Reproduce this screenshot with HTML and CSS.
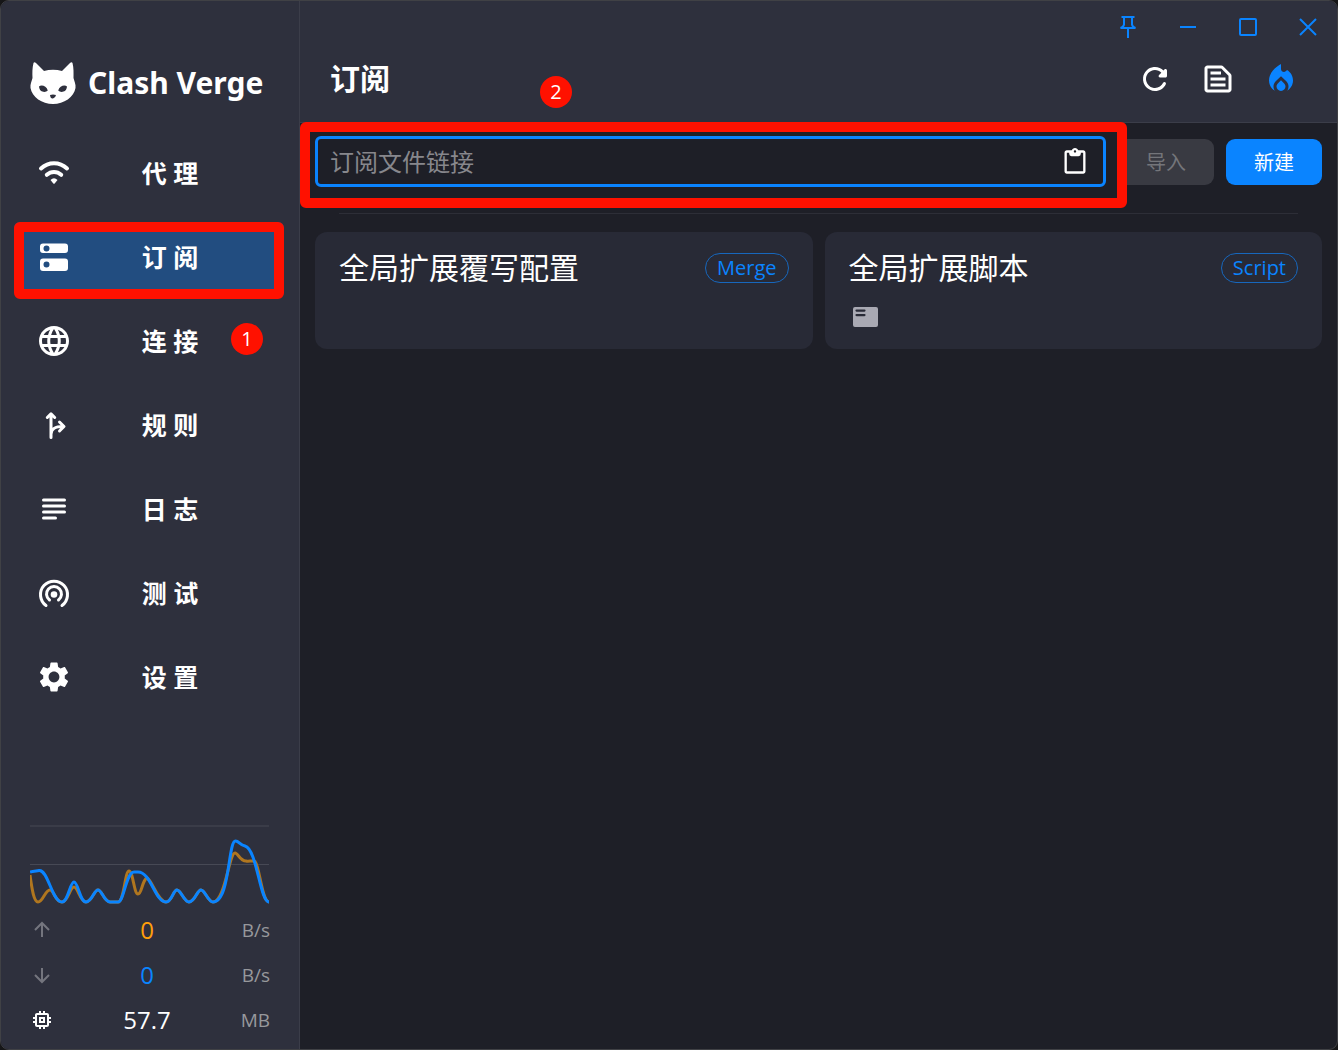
FILE: index.html
```html
<!DOCTYPE html>
<html lang="zh-CN">
<head>
    <meta charset="UTF-8">
    <meta name="viewport" content="width=device-width, initial-scale=1.0">
    <title>Clash Verge</title>
    <link rel="stylesheet" href="styles.css">
</head>
<body>
    <div class="window">
        <aside class="sidebar">
            <div class="brand">
                <svg class="brand-logo" viewBox="0 0 46 44">
                    <path fill="#fff" d="M3.500 2C4 1 5 1.200 6 2L14 10Q23 7.500 32 10L40 2C41 1.200 42 1 42.500 2C43.800 7 43.600 12 43.500 17C44.200 20 46 23 45.500 27C44 36 34 43 23 43S2 36 .5 27C0 23 1.800 20 2.500 17C2.300 12 2.200 7 3.500 2z"/>
                    <path fill="#2e303d" d="M9 25.500C11 23.500 16.500 24.500 17.800 29.500C15.500 32 9.500 31.500 9 25.500zM37 25.500C35 23.500 29.500 24.500 28.200 29.500C30.500 32 36.500 31.500 37 25.500zM20 34Q23 33 26 34Q25.500 37 23 37.500T20 34z"/>
                </svg>
                <span class="brand-name">Clash Verge</span>
            </div>

            <nav class="nav">
                <a href="#proxies" class="nav-item">
                    <svg class="icon" viewBox="0 0 36 36"><path class="line wide" d="M5 13.500C12.500 6.500 23.500 6.500 31 13.500M10.800 19.800C15 16 21 16 25.200 19.800"/><path d="M14.500 25Q18 21.500 21.500 25L18.700 28.500Q18 29.200 17.300 28.500z"/></svg>
                    <span class="nav-text">代 理</span>
                </a>
                <a href="#profiles" class="nav-item active">
                    <svg class="icon" viewBox="0 0 36 36"><path fill-rule="evenodd" d="M7 4.500h22q3 0 3 3v3.500q0 3-3 3H7q-3 0-3-3V7.500q0-3 3-3zM10.500 6.500a3 3 0 1 0 0 6a3 3 0 1 0 0-6zM7 19.500h22q3 0 3 3V29q0 3-3 3H7q-3 0-3-3v-6.500q0-3 3-3zM10.500 22.500a3 3 0 1 0 0 6a3 3 0 1 0 0-6z"/></svg>
                    <span class="nav-text">订 阅</span>
                    <span class="mark mark-nav"></span>
                </a>
                <a href="#connections" class="nav-item">
                    <svg class="icon" viewBox="0 0 24 24"><path d="M11.990 2C6.470 2 2 6.480 2 12s4.470 10 9.990 10C17.520 22 22 17.520 22 12S17.520 2 11.990 2zm6.930 6h-2.950c-.32-1.250-.78-2.450-1.380-3.560 1.840.63 3.370 1.910 4.330 3.560zM12 4.040c.83 1.200 1.480 2.530 1.910 3.960h-3.820c.43-1.430 1.080-2.760 1.910-3.960zM4.260 14C4.100 13.360 4 12.690 4 12s.1-1.360.26-2h3.380c-.08.66-.14 1.320-.14 2 0 .68.06 1.340.14 2H4.260zm.82 2h2.950c.32 1.250.78 2.450 1.380 3.560-1.840-.63-3.370-1.900-4.330-3.560zm2.950-8H5.080c.96-1.660 2.490-2.930 4.330-3.560C8.810 5.550 8.350 6.750 8.030 8zM12 19.960c-.83-1.200-1.480-2.530-1.910-3.960h3.820c-.43 1.430-1.080 2.760-1.910 3.960zM14.340 14H9.660c-.09-.66-.16-1.320-.16-2 0-.68.07-1.350.16-2h4.680c.09.65.16 1.320.16 2 0 .68-.07 1.340-.16 2zm.25 5.560c.6-1.110 1.060-2.310 1.380-3.560h2.950c-.96 1.650-2.490 2.930-4.330 3.560zM16.360 14c.08-.66.14-1.320.14-2 0-.68-.06-1.340-.14-2h3.380c.16.64.26 1.310.26 2s-.1 1.360-.26 2h-3.380z"/></svg>
                    <span class="nav-text">连 接</span>
                    <span class="step step-nav">1</span>
                </a>
                <a href="#rules" class="nav-item">
                    <svg class="icon" viewBox="0 0 36 36"><path class="line" d="M15 7v23.500M11.300 10.500L15 6.800l3.700 3.700M15 27c.5-5.500 4-7.500 12-7.500M23.500 15l4.500 4.500-4.500 4.500"/></svg>
                    <span class="nav-text">规 则</span>
                </a>
                <a href="#logs" class="nav-item">
                    <svg class="icon" viewBox="0 0 36 36"><path class="line" d="M7.500 9h21M7.500 15h21M7.500 21h21M7.500 27h12"/></svg>
                    <span class="nav-text">日 志</span>
                </a>
                <a href="#test" class="nav-item">
                    <svg class="icon" viewBox="0 0 36 36"><path class="line" d="M10 30.500a13.500 13.500 0 1 1 16 0M13.500 25a7.500 7.500 0 1 1 9 0"/><circle cx="18" cy="19.500" r="3.300"/></svg>
                    <span class="nav-text">测 试</span>
                </a>
                <a href="#settings" class="nav-item">
                    <svg class="icon" viewBox="0 0 24 24"><path d="M19.140 12.940c.04-.3.06-.61.06-.94 0-.32-.02-.64-.07-.94l2.030-1.580c.18-.14.23-.41.12-.61l-1.920-3.320c-.12-.22-.37-.29-.59-.22l-2.390.96c-.5-.38-1.030-.7-1.620-.94l-.36-2.540c-.04-.24-.24-.41-.48-.41h-3.840c-.24 0-.43.17-.47.41l-.36 2.540c-.59.24-1.130.57-1.620.94l-2.390-.96c-.22-.08-.47 0-.59.22L2.740 8.870c-.12.21-.08.47.12.61l2.030 1.580c-.05.3-.09.63-.09.94s.02.64.07.94l-2.030 1.580c-.18.14-.23.41-.12.61l1.920 3.320c.12.22.37.29.59.22l2.390-.96c.5.38 1.030.7 1.620.94l.36 2.540c.05.24.24.41.48.41h3.840c.24 0 .44-.17.47-.41l.36-2.540c.59-.24 1.130-.56 1.620-.94l2.390.96c.22.08.47 0 .59-.22l1.920-3.320c.12-.22.07-.47-.12-.61l-2.010-1.580zM12 15.600c-1.980 0-3.600-1.620-3.600-3.600s1.620-3.600 3.600-3.600 3.600 1.620 3.600 3.600-1.620 3.600-3.600 3.600z"/></svg>
                    <span class="nav-text">设 置</span>
                </a>
            </nav>

            <div class="traffic">
                <svg class="traffic-graph" viewBox="0 0 240 83">
                    <path class="graph-grid" d="M0 2H239M0 40.500H239"/>
                    <path class="graph-up" d="M0 51C2 66 4 78 8 78C13 78 15 66 20 66C24 66 25 78 32 78C38 78 40 63 44 63C48 63 50 78 56 78C62 78 64 66 68 66C72 66 74 78 80 78H88C94 78 95 47 99 47C103 47 104 70 108 70C112 70 112 56 117 54C122 56 128 78 136 78C142 78 143 66 147 66C151 66 154 78 159 78C165 78 167 66 171 66C175 66 178 78 183 78C195 78 199 29 205 29C208 29 210 37 216 37C219 38 222 36 225 37.500C230 44 232 78 239 78"/>
                    <path class="graph-down" d="M0 48C3 47 6 47 9 46.500C18 45 22 78 32 78C38 78 40 58 44 58C48 58 50 78 56 78C62 78 64 66 68 66C72 66 74 78 80 78H88C94 78 96 48 104 48H108C121 48 125 78 136 78C142 78 143 66 147 66C151 66 154 78 159 78C165 78 167 66 171 66C175 66 178 78 183 78C200 78 198 17 205.500 17C209 17 210 21 215 22C227 25 230 78 239 78"/>
                </svg>
                <div class="stat">
                    <svg class="stat-icon dim" viewBox="0 0 24 24"><path d="M12 19V5M5 12l7-7 7 7"/></svg>
                    <span class="stat-value up">0</span>
                    <span class="stat-unit">B/s</span>
                </div>
                <div class="stat">
                    <svg class="stat-icon dim" viewBox="0 0 24 24"><path d="M12 5v14M5 12l7 7 7-7"/></svg>
                    <span class="stat-value down">0</span>
                    <span class="stat-unit">B/s</span>
                </div>
                <div class="stat">
                    <svg class="stat-icon" viewBox="0 0 24 24"><path d="M15 9H9v6h6V9zm-2 4h-2v-2h2v2zm8-2V9h-2V7c0-1.100-.9-2-2-2h-2V3h-2v2h-2V3H9v2H7c-1.100 0-2 .9-2 2v2H3v2h2v2H3v2h2v2c0 1.100.9 2 2 2h2v2h2v-2h2v2h2v-2h2c1.100 0 2-.9 2-2v-2h2v-2h-2v-2h2zm-4 6H7V7h10v10z"/></svg>
                    <span class="stat-value">57.7</span>
                    <span class="stat-unit">MB</span>
                </div>
            </div>
        </aside>

        <main class="main">
            <header class="header">
                <div class="window-controls">
                    <button type="button" aria-label="Pin"><svg viewBox="0 0 24 24"><path d="M5.500 2h13M8 2v7.500Q7.500 12 4.500 13h15Q16.500 12 16 9.500V2M12 13v10"/></svg></button>
                    <button type="button" aria-label="Minimize"><svg viewBox="0 0 24 24"><path d="M4 12h16"/></svg></button>
                    <button type="button" aria-label="Maximize"><svg viewBox="0 0 24 24"><rect x="4" y="4" width="16" height="16" rx="1"/></svg></button>
                    <button type="button" aria-label="Close"><svg viewBox="0 0 24 24"><path d="M4 4l16 16M20 4L4 20"/></svg></button>
                </div>
                <div class="title-row">
                    <h1>订阅</h1>
                    <div class="actions">
                        <button type="button" aria-label="Refresh"><svg class="icon" viewBox="0 0 24 24"><path d="M17.650 6.350c-1.630-1.630-3.940-2.570-6.480-2.310-3.670.37-6.690 3.350-7.100 7.020C3.520 15.910 7.270 20 12 20c3.190 0 5.930-1.870 7.210-4.560.32-.67-.16-1.440-.9-1.440-.37 0-.72.2-.88.53-1.130 2.430-3.840 3.970-6.800 3.310-2.220-.49-4.010-2.300-4.480-4.520C5.310 9.440 8.260 6 12 6c1.660 0 3.140.69 4.220 1.780l-1.510 1.510c-.63.63-.19 1.710.7 1.710H19c.55 0 1-.45 1-1V6.410c0-.89-1.080-1.340-1.710-.71z"/></svg></button>
                        <button type="button" aria-label="Runtime config"><svg class="icon" viewBox="0 0 24 24"><path d="M14.170 5 19 9.830V19H5V5h9.170m0-2H5c-1.100 0-2 .9-2 2v14c0 1.100.9 2 2 2h14c1.100 0 2-.9 2-2V9.830c0-.53-.21-1.040-.59-1.410l-4.830-4.830c-.37-.38-.88-.59-1.410-.59zM7 15h10v2H7v-2zm0-4h10v2H7v-2zm0-4h7v2H7V7z"/></svg></button>
                        <button type="button" class="fire" aria-label="Reactivate"><svg class="icon" viewBox="0 0 24 24"><path d="M16 6l-.44.55C14.380 8.020 12 7.190 12 5.300V2S4 6 4 13c0 2.920 1.560 5.470 3.890 6.860-.56-.79-.89-1.760-.89-2.800 0-1.320.52-2.560 1.470-3.500L12 10.100l3.530 3.470c.95.93 1.470 2.170 1.470 3.500 0 1.020-.31 1.960-.85 2.750 1.890-1.150 3.290-3.060 3.710-5.300.66-3.550-1.070-6.900-3.860-8.520zM12 12.900l-2.130 2.090c-.56.56-.87 1.290-.87 2.070C9 18.680 10.350 20 12 20s3-1.320 3-2.940c0-.78-.31-1.520-.87-2.070L12 12.900z"/></svg></button>
                    </div>
                </div>
                <span class="step step-header">2</span>
            </header>

            <section class="content">
                <form class="toolbar" onsubmit="return false;">
                    <div class="url-field">
                        <input type="text" id="profile-url" placeholder="订阅文件链接" aria-label="订阅文件链接">
                        <button type="button" class="paste" aria-label="Paste"><svg viewBox="0 0 24 24"><path d="M19 2h-4.180C14.400.84 13.300 0 12 0S9.600.84 9.180 2H5c-1.100 0-2 .9-2 2v16c0 1.100.9 2 2 2h14c1.100 0 2-.9 2-2V4c0-1.100-.9-2-2-2zm-7 0c.55 0 1 .45 1 1s-.45 1-1 1-1-.45-1-1 .45-1 1-1zm7 18H5V4h2v1q0 2 2 2h6q2 0 2-2V4h2v16z"/></svg></button>
                        <span class="mark mark-field"></span>
                    </div>
                    <button type="submit" class="btn" disabled>导入</button>
                    <button type="button" class="btn btn-primary">新建</button>
                </form>

                <hr class="divider">

                <div class="cards">
                    <article class="card">
                        <div class="card-head">
                            <h2>全局扩展覆写配置</h2>
                            <span class="chip">Merge</span>
                        </div>
                    </article>
                    <article class="card">
                        <div class="card-head">
                            <h2>全局扩展脚本</h2>
                            <span class="chip">Script</span>
                        </div>
                        <button type="button" class="console" aria-label="Console"><svg viewBox="0 0 32 30"><path fill-rule="evenodd" d="M6 5h21q2 0 2 2v16q0 2-2 2H6q-2 0-2-2V7q0-2 2-2zM7.500 7.500a1 1 0 0 0 0 2.200h8a1 1 0 0 0 0-2.200zM7.500 12a1 1 0 0 0 0 2.200h8a1 1 0 0 0 0-2.200z"/></svg></button>
                    </article>
                </div>
            </section>
        </main>
    </div>
</body>
</html>
```

FILE: styles.css
```css
* {
    box-sizing: border-box;
}

body {
    margin: 0;
    background-color: #161618;
    color: #fff;
    font-family: "Open Sans", "Noto Sans CJK SC", sans-serif;
}

h1, h2 {
    margin: 0;
}

button {
    padding: 0;
    border: none;
    background: none;
    color: inherit;
    font-family: inherit;
    cursor: pointer;
}

svg {
    display: block;
}

.window {
    display: flex;
    min-height: 100vh;
    border: 1px solid #404145;
    border-radius: 9px;
    overflow: hidden;
    background-color: #1e1f27;
}

.icon {
    width: 36px;
    height: 36px;
    flex-shrink: 0;
    fill: currentColor;
}

.icon .line {
    fill: none;
    stroke: currentColor;
    stroke-width: 3;
    stroke-linecap: round;
    stroke-linejoin: round;
}

.icon .wide {
    stroke-width: 4;
}

/* sidebar */
.sidebar {
    display: flex;
    flex-direction: column;
    flex-shrink: 0;
    width: 299px;
    padding: 60px 0 7px;
    border-right: 1px solid #3b3d49;
    background-color: #2e303d;
}

.brand {
    display: flex;
    align-items: center;
    gap: 12px;
    height: 44px;
    margin: 0 29px 33px;
}

.brand-logo {
    width: 46px;
    height: 44px;
}

.brand-name {
    font-family: "Noto Sans", "Open Sans", sans-serif;
    font-size: 30px;
    font-weight: 700;
    line-height: 44px;
    white-space: nowrap;
}

.nav {
    display: flex;
    flex: 1;
    flex-direction: column;
    gap: 14px;
    padding: 0 15px 0 13px;
}

.nav-item {
    position: relative;
    display: flex;
    align-items: center;
    height: 70px;
    padding: 0 16px 0 22px;
    border-radius: 6px;
    color: #fff;
    text-decoration: none;
}

.nav-item.active {
    background-color: #224d80;
}

.nav-text {
    flex: 1;
    font-size: 25px;
    font-weight: 700;
    line-height: 36px;
    text-align: center;
}

/* red guide marks */
.mark {
    position: absolute;
    border: 10px solid #ff1100;
    border-radius: 6px;
    pointer-events: none;
}

.mark-nav {
    inset: 0 0 -7px;
}

.mark-field {
    inset: -17px -24px -24px -18px;
}

.step {
    position: absolute;
    width: 32px;
    height: 32px;
    border-radius: 50%;
    background-color: #ff1100;
    font-size: 20px;
    line-height: 32px;
    text-align: center;
}

.step-nav {
    top: 17px;
    left: 217px;
}

.step-header {
    top: 75px;
    left: 240px;
}

/* traffic */
.traffic {
    padding: 0 29px;
}

.traffic-graph {
    width: 100%;
    height: 83px;
    fill: none;
}

.graph-grid {
    stroke: #474955;
}

.graph-up {
    stroke: #b0761f;
    stroke-width: 3;
}

.graph-down {
    stroke: #0a84ff;
    stroke-width: 3;
}

.stat {
    display: grid;
    grid-template-columns: 24px 1fr 30px;
    align-items: center;
    height: 45px;
}

.stat-icon {
    width: 24px;
    height: 24px;
    fill: #fff;
}

.stat-icon.dim {
    fill: none;
    stroke: #74757e;
    stroke-width: 2;
}

.stat-value {
    font-size: 24px;
    text-align: center;
}

.stat-value.up {
    color: #ff9f0a;
}

.stat-value.down {
    color: #0a84ff;
}

.stat-unit {
    color: #97989c;
    font-size: 19px;
    text-align: right;
    white-space: nowrap;
}

/* header */
.main {
    flex: 1;
    min-width: 0;
}

.header {
    position: relative;
    height: 122px;
    border-bottom: 1px solid #3b3d49;
    background-color: #2e303d;
}

.window-controls {
    display: flex;
    justify-content: flex-end;
    gap: 36px;
    padding: 14px 17px 0;
    color: #0a84ff;
}

.window-controls svg {
    width: 24px;
    height: 24px;
    overflow: visible;
    fill: none;
    stroke: currentColor;
    stroke-width: 2;
}

.title-row {
    display: flex;
    align-items: center;
    justify-content: space-between;
    height: 36px;
    margin-top: 22px;
    padding: 0 38px 0 30px;
}

.title-row h1 {
    font-size: 30px;
    font-weight: 700;
    line-height: 36px;
}

.actions {
    display: flex;
    gap: 27px;
}

.fire {
    color: #0a84ff;
}

/* content */
.content {
    padding: 13px 15px;
}

.toolbar {
    display: flex;
    align-items: center;
    gap: 12px;
}

.url-field {
    position: relative;
    display: flex;
    flex: 1;
    align-items: center;
    height: 51px;
    padding: 0 14px 0 12px;
    border: 3px solid #0a84ff;
    border-radius: 6px;
}

.url-field input {
    flex: 1;
    min-width: 0;
    padding: 0;
    border: none;
    outline: none;
    background: none;
    color: #fff;
    font-family: inherit;
    font-size: 24px;
}

.url-field input::placeholder {
    color: #87878c;
    opacity: 1;
}

.paste svg {
    width: 28px;
    height: 28px;
    fill: #fff;
}

.btn {
    width: 96px;
    height: 46px;
    border-radius: 9px;
    background-color: #393a42;
    color: #74757a;
    font-size: 20px;
}

.btn-primary {
    background-color: #0a84ff;
    color: #fff;
}

.divider {
    height: 1px;
    margin: 26px 24px 18px;
    border: none;
    background-color: #2d2e37;
}

.cards {
    display: grid;
    grid-template-columns: 1fr 1fr;
    gap: 12px;
}

.card {
    min-height: 117px;
    padding: 18px 24px 17px;
    border-radius: 12px;
    background-color: #282a36;
}

.card-head {
    display: flex;
    align-items: center;
    justify-content: space-between;
    height: 36px;
}

.card h2 {
    font-size: 30px;
    font-weight: 400;
    line-height: 36px;
}

.chip {
    height: 30px;
    padding: 0 11px;
    border: 1px solid #1767bd;
    border-radius: 15px;
    color: #0a84ff;
    font-size: 20px;
    line-height: 28px;
}

.console {
    display: block;
    margin-top: 16px;
}

.console svg {
    width: 32px;
    height: 30px;
    fill: #a9a9b3;
}
```
